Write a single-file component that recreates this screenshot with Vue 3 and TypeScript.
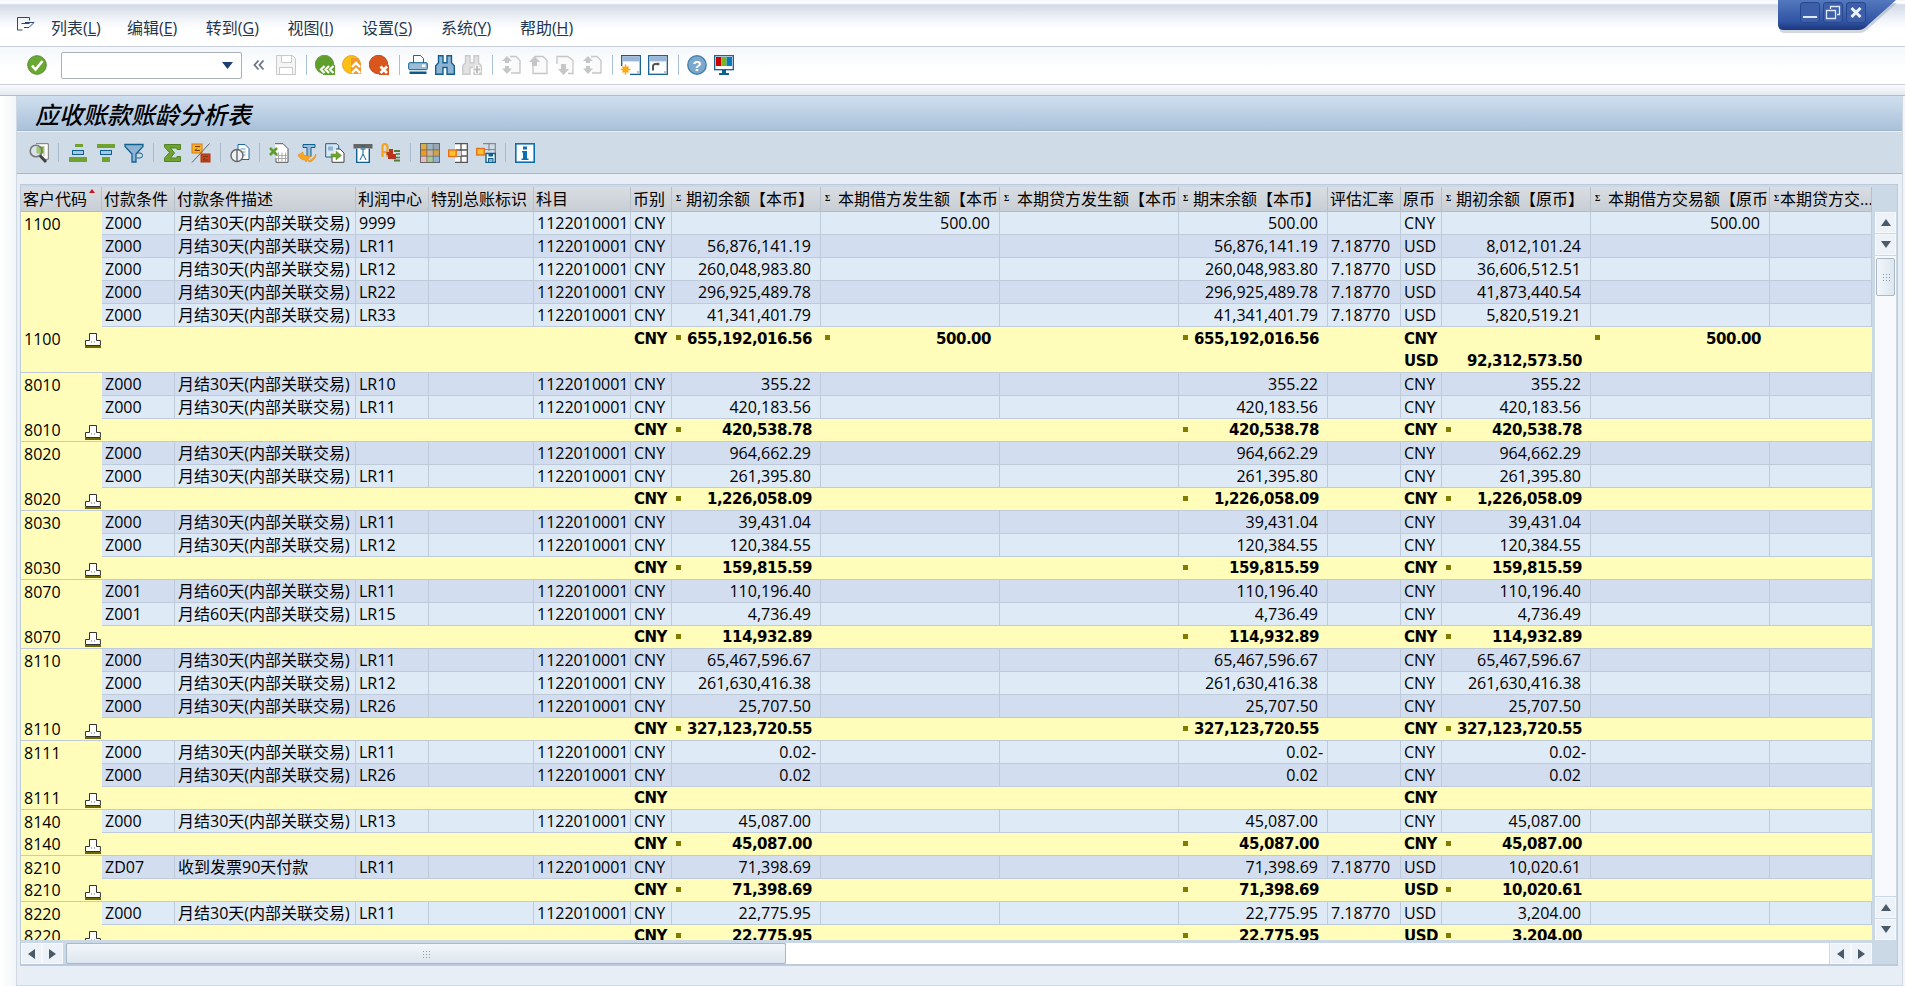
<script setup lang="ts">
interface Row { sum: boolean; alt: boolean; last: boolean; cells: string[]; marks: number[]; icon: boolean }

const L = '月结30天(内部关联交易)'
const M = '月结60天(内部关联交易)'
const A = '1122010001'
const R = '7.18770'

const rows: Row[] = []
let idx = 0
function d(c: string, term: string, desc: string, pc: string, open: string, dr: string, end: string, rate: string, ocur: string, oopen: string, odr: string) {
  rows.push({ sum: false, alt: idx % 2 === 1, last: false, icon: false, marks: [], cells: [c, term, desc, pc, '', A, 'CNY', open, dr, '', end, rate, ocur, oopen, odr, ''] })
  idx++
}
function s(c: string, ocur: string, v: string, end = v, oopen = v) {
  rows.push({ sum: true, alt: false, last: true, icon: true, marks: v ? [7, 10, 13] : [], cells: [c, '', '', '', '', '', 'CNY', v, '', '', end, '', ocur, oopen, '', ''] })
}

d('1100', 'Z000', L, '9999', '', '500.00', '500.00', '', 'CNY', '', '500.00')
d('', 'Z000', L, 'LR11', '56,876,141.19', '', '56,876,141.19', R, 'USD', '8,012,101.24', '')
d('', 'Z000', L, 'LR12', '260,048,983.80', '', '260,048,983.80', R, 'USD', '36,606,512.51', '')
d('', 'Z000', L, 'LR22', '296,925,489.78', '', '296,925,489.78', R, 'USD', '41,873,440.54', '')
d('', 'Z000', L, 'LR33', '41,341,401.79', '', '41,341,401.79', R, 'USD', '5,820,519.21', '')
rows.push({ sum: true, alt: false, last: false, icon: true, marks: [7, 8, 10, 14], cells: ['1100', '', '', '', '', '', 'CNY', '655,192,016.56', '500.00', '', '655,192,016.56', '', 'CNY', '', '500.00', ''] })
rows.push({ sum: true, alt: false, last: true, icon: false, marks: [], cells: ['', '', '', '', '', '', '', '', '', '', '', '', 'USD', '92,312,573.50', '', ''] })
d('8010', 'Z000', L, 'LR10', '355.22', '', '355.22', '', 'CNY', '355.22', '')
d('', 'Z000', L, 'LR11', '420,183.56', '', '420,183.56', '', 'CNY', '420,183.56', '')
s('8010', 'CNY', '420,538.78')
d('8020', 'Z000', L, '', '964,662.29', '', '964,662.29', '', 'CNY', '964,662.29', '')
d('', 'Z000', L, 'LR11', '261,395.80', '', '261,395.80', '', 'CNY', '261,395.80', '')
s('8020', 'CNY', '1,226,058.09')
d('8030', 'Z000', L, 'LR11', '39,431.04', '', '39,431.04', '', 'CNY', '39,431.04', '')
d('', 'Z000', L, 'LR12', '120,384.55', '', '120,384.55', '', 'CNY', '120,384.55', '')
s('8030', 'CNY', '159,815.59')
d('8070', 'Z001', M, 'LR11', '110,196.40', '', '110,196.40', '', 'CNY', '110,196.40', '')
d('', 'Z001', M, 'LR15', '4,736.49', '', '4,736.49', '', 'CNY', '4,736.49', '')
s('8070', 'CNY', '114,932.89')
d('8110', 'Z000', L, 'LR11', '65,467,596.67', '', '65,467,596.67', '', 'CNY', '65,467,596.67', '')
d('', 'Z000', L, 'LR12', '261,630,416.38', '', '261,630,416.38', '', 'CNY', '261,630,416.38', '')
d('', 'Z000', L, 'LR26', '25,707.50', '', '25,707.50', '', 'CNY', '25,707.50', '')
s('8110', 'CNY', '327,123,720.55')
d('8111', 'Z000', L, 'LR11', '0.02-', '', '0.02-', '', 'CNY', '0.02-', '')
d('', 'Z000', L, 'LR26', '0.02', '', '0.02', '', 'CNY', '0.02', '')
s('8111', 'CNY', '')
d('8140', 'Z000', L, 'LR13', '45,087.00', '', '45,087.00', '', 'CNY', '45,087.00', '')
s('8140', 'CNY', '45,087.00')
d('8210', 'ZD07', '收到发票90天付款', 'LR11', '71,398.69', '', '71,398.69', R, 'USD', '10,020.61', '')
s('8210', 'USD', '71,398.69', '71,398.69', '10,020.61')
d('8220', 'Z000', L, 'LR11', '22,775.95', '', '22,775.95', R, 'USD', '3,204.00', '')
s('8220', 'USD', '22,775.95', '22,775.95', '3,204.00')

const widths = [81, 73, 181, 73, 105, 97, 41, 149, 179, 179, 149, 73, 41, 149, 179, 102]
const numeric = new Set([7, 8, 9, 10, 13, 14, 15])

const headers = [
  { t: '客户代码', sort: true }, { t: '付款条件' }, { t: '付款条件描述' }, { t: '利润中心' }, { t: '特别总账标识' }, { t: '科目' }, { t: '币别' },
  { t: '期初余额【本币】', sig: 'near' }, { t: '本期借方发生额【本币', sig: 'far' }, { t: '本期贷方发生额【本币', sig: 'far' }, { t: '期末余额【本币】', sig: 'near' },
  { t: '评估汇率' }, { t: '原币' }, { t: '期初余额【原币】', sig: 'near' }, { t: '本期借方交易额【原币', sig: 'far' }, { t: '本期贷方交...', sig: 'tight' }
]
const menus = [['列表(', 'L'], ['编辑(', 'E'], ['转到(', 'G'], ['视图(', 'I'], ['设置(', 'S'], ['系统(', 'Y'], ['帮助(', 'H']]
</script>

<template>
  <div class="page">
    <header class="menubar">
      <svg class="menuicon" width="18" height="14" viewBox="0 0 18 14"><path d="M.5.5h12v3M12.500 6.500H4.500M.5.5v12.500h5M7 10.500h5l5-5H8" fill="none" stroke="#2b4a78"/></svg>
      <nav class="menus">
        <span v-for="m in menus" :key="m[1]">{{ m[0] }}<u>{{ m[1] }}</u>)</span>
      </nav>
      <div class="winbtns">
        <svg class="winshape" width="128" height="36" viewBox="0 0 128 36">
          <defs><linearGradient id="wg" x1="0" y1="0" x2="0" y2="1"><stop offset="0" stop-color="#5478bd"/><stop offset=".75" stop-color="#2f52a3"/><stop offset="1" stop-color="#1c3578"/></linearGradient></defs>
          <path d="M2 0h118l-28 25q-4 5-10 5H8q-6 0-6-5z" fill="#9aa5b8" opacity=".45" transform="translate(1 3)"/>
          <path d="M2 0h118l-28 25q-4 5-10 5H8q-6 0-6-5z" fill="url(#wg)"/>
        </svg>
        <div class="wbtn"><svg width="20" height="21" viewBox="0 0 20 21"><rect x="3" y="14" width="14" height="2" fill="#dfe8f6"/></svg></div>
        <div class="wbtn"><svg width="20" height="21" viewBox="0 0 20 21"><path d="M7.500 7V4.500h9v8H14M3.500 8.500h9v8h-9z" fill="none" stroke="#dfe8f6" stroke-width="1.300"/></svg></div>
        <div class="wbtn"><svg width="20" height="21" viewBox="0 0 20 21"><path d="M5.500 6l9 9M14.500 6l-9 9" stroke="#eef3fb" stroke-width="3"/></svg></div>
      </div>
    </header>

    <div class="tb1">
      <svg class="ic" viewBox="0 0 20 20"><circle cx="10" cy="10" r="9.300" fill="#6ba733" stroke="#4f8a34"/><path d="M5 10.500l3.500 4L15.500 6" fill="none" stroke="#fff" stroke-width="2.600"/></svg>
      <div class="combo"><svg width="11" height="7" viewBox="0 0 11 7"><path d="M0 0h11L5.500 7z" fill="#1f3f70"/></svg></div>
      <svg class="chev" width="12" height="12" viewBox="0 0 12 12"><path d="M5.500 1.500L1.500 6l4 4.500M10.500 1.500L6.500 6l4 4.500" fill="none" stroke="#6b7480" stroke-width="1.800"/></svg>
      <svg class="ic ml" viewBox="0 0 20 20"><path d="M.5.500h16l3 3v16H.5z" fill="#f5f5f5" stroke="#c9c9c9"/><path d="M5.500.5h10v7h-10zM3.500 12.500h13v7h-13z" fill="#fff" stroke="#c9c9c9"/></svg>
      <i class="sep s1"></i>
      <svg class="ic" viewBox="0 0 20 20"><circle cx="9.500" cy="9.500" r="9.200" fill="#5f9f2b" stroke="#6b9b3c"/><path d="M8 10h12v10H8z" fill="#5f9f2b"/><path d="M9.500 11l-3.500 3.500L9.500 18M14 11l-3.500 3.500L14 18M18.500 11L15 14.500l3.500 3.500" fill="none" stroke="#fff" stroke-width="2.200"/></svg>
      <svg class="ic" viewBox="0 0 20 20"><circle cx="9.500" cy="9.500" r="9" fill="#fdbf12" stroke="#f0a21c"/><path d="M9 3h7l3 6v10H9z" fill="#f29a2e"/><path d="M10 12l4-4 4 4M10 18l4-4 4 4" fill="none" stroke="#fff" stroke-width="2.400"/></svg>
      <svg class="ic" viewBox="0 0 20 20"><circle cx="9.500" cy="9.500" r="9.200" fill="#d9561d" stroke="#c8451a"/><path d="M10 10h10v10H10z" fill="#d9561d"/><path d="M11.500 11.500l6.500 6.500M18 11.500L11.500 18" stroke="#fff" stroke-width="2.800"/></svg>
      <i class="sep"></i>
      <svg class="ic" viewBox="0 0 20 20"><path d="M5.500.5h7l3 3v5h-10z" fill="#fff" stroke="#555"/><rect x=".7" y="7.700" width="18.600" height="7" rx="1" fill="#9dbcd8" stroke="#10608f"/><rect x="14" y="9.500" width="3.500" height="2.500" fill="#fff"/><rect x="1.500" y="16.500" width="17" height="2.500" fill="#0a5a8c"/></svg>
      <svg class="ic" viewBox="0 0 20 20"><path d="M3.500.7h4.500v7h4V.7h4.500v7l2.800 3v8.500h-7.300v-6.700h-4v6.700H.7v-8.500l2.800-3z" fill="#8fb3d3" stroke="#11618f" stroke-width="1.400"/></svg>
      <svg class="ic" viewBox="0 0 20 20"><path d="M3.500.7h4.500v7h4V.7h4.500v7l2.800 3v8.500h-7.300v-6.700h-4v6.700H.7v-8.500l2.800-3z" fill="#e2e2e2" stroke="#cbcbcb" stroke-width="1.400"/><path d="M11 14.500h8M15 10.500v8" stroke="#fff" stroke-width="4"/><path d="M11.500 14.500h7M15 11v7" stroke="#bdbdbd" stroke-width="2"/></svg>
      <i class="sep"></i>
      <svg class="ic" viewBox="0 0 20 20"><path d="M9 1.500h6l4 4v12.500h-9" fill="#fafafa" stroke="#c6c6c6" stroke-width="1.300"/><path d="M6 1l5 5H8v2H4V6H1zM4 11h4v2.500h3L6 19l-5-5.500h3z" fill="#c6c6c6"/></svg>
      <svg class="ic" viewBox="0 0 20 20"><path d="M7 1.500h8l4 4v13H5v-9" fill="#fafafa" stroke="#c6c6c6" stroke-width="1.300"/><path d="M6.500 1l5.500 6H9v4H4V7H1z" fill="#c6c6c6"/></svg>
      <svg class="ic" viewBox="0 0 20 20"><path d="M2 9V1.500h11l5 4v13h-5" fill="#fafafa" stroke="#c6c6c6" stroke-width="1.300"/><path d="M6 9h5v5h3l-5.500 6L3 14h3z" fill="#c6c6c6"/></svg>
      <svg class="ic" viewBox="0 0 20 20"><path d="M9 1.500h6l4 4v12.500h-9" fill="#fafafa" stroke="#c6c6c6" stroke-width="1.300"/><path d="M6 1l5 5H8v2H4V6H1zM4 11h4v2.500h3L6 19l-5-5.500h3z" fill="#c6c6c6"/></svg>
      <i class="sep"></i>
      <svg class="ic" viewBox="0 0 20 20"><path d="M.7 11V.7h18.600v18.600H9" fill="#fff" stroke="#10608f" stroke-width="1.300"/><rect x="1.400" y="1.400" width="17.200" height="5" fill="#9ab7d9"/><rect x="16" y="16" width="2.500" height="2.500" fill="#c4c4c4"/><path d="M4.500 9.500v10M0 14.500h9.500M1.500 11.500l6 6M7.500 11.500l-6 6" stroke="#f6a50e" stroke-width="1.500"/><circle cx="4.500" cy="14.500" r="3" fill="#fbab0b"/></svg>
      <svg class="ic" viewBox="0 0 20 20"><rect x=".7" y=".7" width="18.600" height="18.600" fill="#fff" stroke="#10608f" stroke-width="1.300"/><rect x="1.400" y="1.400" width="17.200" height="5" fill="#9ab7d9"/><rect x="16" y="16" width="2.500" height="2.500" fill="#c4c4c4"/><path d="M5 15.500V11.500q0-2.500 2.500-2.500H10" fill="none" stroke="#555" stroke-width="2"/><path d="M9.500 7l2.500 2-2.500 2z" fill="#555"/></svg>
      <i class="sep"></i>
      <svg class="ic" viewBox="0 0 20 20"><circle cx="10" cy="10" r="9.200" fill="#7ca8cd" stroke="#4583ad" stroke-width="1.400"/><text x="10" y="15.500" text-anchor="middle" class="qm">?</text></svg>
      <svg class="ic" viewBox="0 0 20 20"><rect x=".7" y=".7" width="18.600" height="14" fill="#fff" stroke="#10608f" stroke-width="1.300"/><rect x="2" y="2" width="5.300" height="9" fill="#cc0000"/><rect x="7.300" y="2" width="5.300" height="9" fill="#7ab51d"/><rect x="12.600" y="2" width="5.400" height="9" fill="#0a7abf"/><path d="M8 15h4v3H8zM5 18h10v2H5z" fill="#10608f"/></svg>
    </div>
    <div class="strip"></div>

    <main class="panel">
      <h1 class="title">应收账款账龄分析表</h1>
      <div class="tb2">
        <svg class="ic" viewBox="0 0 20 20"><path d="M7 .7h12.300v15.600H14" fill="#fff" stroke="#777"/><path d="M15 3v10" stroke="#aaa"/><rect x="7.500" y="3.500" width="7" height="7" fill="#6fae2c"/><circle cx="7" cy="8" r="5.800" fill="#eef2f0" fill-opacity=".35" stroke="#777" stroke-width="1.600"/><path d="M11 12.500l6 6.500" stroke="#444" stroke-width="3"/></svg>
        <i class="sep two"></i>
        <svg class="ic" viewBox="0 0 20 20"><rect x="7" y="1" width="8" height="3" fill="#6fa22e"/><rect x="4.500" y="7.500" width="11" height="4" fill="#a6c6e2" stroke="#10608f"/><rect x="1" y="14" width="18" height="5" fill="#6fa22e"/></svg>
        <svg class="ic" viewBox="0 0 20 20"><rect x="1" y="1" width="18" height="4" fill="#6fa22e"/><rect x="4.500" y="7.500" width="11" height="4" fill="#a6c6e2" stroke="#10608f"/><rect x="6" y="14" width="8" height="5" fill="#6fa22e"/></svg>
        <svg class="ic" viewBox="0 0 20 20"><path d="M1 1.500h18v2L12 11v8H8v-8L1 3.500z" fill="#8fb3d3" stroke="#11618f" stroke-width="1.300"/><path d="M13 10h3a2 2 0 010 5h-3" fill="none" stroke="#11618f"/></svg>
        <i class="sep two"></i>
        <svg class="ic" viewBox="0 0 20 20"><path d="M1.500 1.500h16v5h-3.500V5H7.500l4 5-4 5H14v-1.500h3.500v5h-16v-3.500l5-5.500-5-5.500z" fill="#6fa22e" stroke="#4f8424"/></svg>
        <svg class="ic" viewBox="0 0 20 20"><rect x="1" y="1" width="10" height="9" fill="#f6b21f" stroke="#de7a1c"/><rect x="10" y="11" width="9" height="8" fill="#c9431c" stroke="#a83214"/><path d="M4 3.500h5M9 7.500H4l2-2M12 13.500h5M17 17h-5l2-2" stroke="#7a3a10" fill="none"/><path d="M18.500 .5L1 19.500" stroke="#666"/></svg>
        <i class="sep two"></i>
        <svg class="ic" viewBox="0 0 20 20"><path d="M8 1.500h7l4 4v11H8z" fill="#fff" stroke="#1b6a9a"/><path d="M10.500 6h5M10.500 9h5M10.500 12h5" stroke="#5a93bd"/><circle cx="7" cy="12.500" r="6" fill="#eef2f6" stroke="#666" stroke-width="1.400"/><path d="M7 6.500v12" stroke="#666" stroke-width="1.400"/></svg>
        <i class="sep two"></i>
        <svg class="ic" viewBox="0 0 20 20"><path d="M6 .7h8l5 5v13.600H7V15" fill="#fff" stroke="#555"/><path d="M9.500 9.500v9M13 9.500v9M16.500 9.500v9M7 12.500h12M7 15.500h12" stroke="#aaa"/><path d="M1 5l7 7M8 5l-7 7" stroke="#5e9e2a" stroke-width="2.600"/></svg>
        <svg class="ic" viewBox="0 0 20 20"><path d="M6 1.500h12v3h-4v9h-4v-9H6z" fill="#9cbcd9" stroke="#10608f"/><path d="M1 12l5-3v2c2 2 4 2 8 2l-5 6-1-2c-3 0-6-2-7-5zM19 11c0 4-3 7-6 8l-2-1c3-1 6-3 8-7z" fill="#f9a51d" stroke="#e6861b" stroke-width=".6"/></svg>
        <svg class="ic" viewBox="0 0 20 20"><path d="M.7.700h11l2 2V14h-13z" fill="#dae6f1" stroke="#10608f"/><path d="M11 6h4l4 4v9.300H7V14" fill="#fff" stroke="#444"/><path d="M3 3.500h5v4H3z" fill="#8fb3d3"/><path d="M6 11h5V8l5.500 4.500L11 17v-3H6z" fill="#6fa22e" stroke="#5a8c25" stroke-width=".5"/></svg>
        <svg class="ic" viewBox="0 0 20 20"><rect x=".5" y="1" width="19" height="4.500" fill="#666"/><path d="M3.700 5.500v14h12.600v-14" fill="#fff" stroke="#10608f" stroke-width="1.400"/><path d="M8 3h4M10 6v5l-3 6M10 11l3 6M7.500 6h5" fill="none" stroke="#10608f"/></svg>
        <svg class="ic" viewBox="0 0 20 20"><path d="M1.500 14V4q0-3 2.500-3t2.500 3v10M1.500 9h5" fill="none" stroke="#f6a21e" stroke-width="2.200"/><path d="M8 6h4v5h3v5H7v-4H5.500V9H8z" fill="#b83420"/><path d="M13 8h6M13 17.500h6" stroke="#4f7d36" stroke-width="2"/><path d="M15 11h4M15 14.500h4" stroke="#4f7d36" stroke-width="1.600"/></svg>
        <i class="sep two"></i>
        <svg class="ic" viewBox="0 0 20 20"><rect width="20" height="20" fill="#666"/><rect x="1" y="1" width="5.500" height="5.500" fill="#d6ae4c"/><rect x="7.300" y="1" width="5.500" height="5.500" fill="#9ab6c6"/><rect x="13.500" y="1" width="5.500" height="5.500" fill="#9aa5b0"/><rect x="1" y="7.300" width="5.500" height="5.500" fill="#ef9a22"/><rect x="7.300" y="7.300" width="5.500" height="5.500" fill="#cbb3a0"/><rect x="13.500" y="7.300" width="5.500" height="5.500" fill="#cda24a"/><rect x="1" y="13.500" width="5.500" height="5.500" fill="#e7bcc0"/><rect x="7.300" y="13.500" width="5.500" height="5.500" fill="#a8c98a"/><rect x="13.500" y="13.500" width="5.500" height="5.500" fill="#8db1d6"/></svg>
        <svg class="ic" viewBox="0 0 20 20"><rect x="7" y="0" width="13" height="20" fill="#fff"/><path d="M7 .7h12.300v18.600H7M13 1v18M8 7h11M8 13h11" fill="none" stroke="#555" stroke-width="1.300"/><rect x="8" y="8" width="5" height="5" fill="#cfd6dc"/><rect x=".7" y="7" width="7.500" height="6.500" fill="#f9c22b" stroke="#e4711f" stroke-width="1.400"/></svg>
        <svg class="ic" viewBox="0 0 20 20"><path d="M7 .7h12.300V10M13 1v7M7 6.500h12" fill="none" stroke="#888" stroke-width="1.200"/><rect x=".7" y="5.500" width="7.500" height="6.500" fill="#f9c22b" stroke="#e4711f" stroke-width="1.400"/><path d="M10 10.500h9.300v9H10z" fill="#fff" stroke="#10608f" stroke-width="1.400"/><rect x="12.500" y="10.500" width="4.500" height="3" fill="#10608f"/><rect x="12.500" y="15.500" width="4.500" height="4" fill="#8fb3d3" stroke="#10608f"/></svg>
        <i class="sep two"></i>
        <svg class="ic" viewBox="0 0 20 20"><rect x=".8" y=".8" width="18.400" height="18.400" fill="#fff" stroke="#0a6fb0" stroke-width="1.600"/><rect x="8" y="3.500" width="4" height="3" fill="#0a6fb0"/><path d="M7 8h5v7.500h1.500V17h-7v-1.500H8V9.500H7z" fill="#0a6fb0"/></svg>
      </div>

      <section class="body">
        <div class="frame">
          <div class="main">
            <div class="viewport">
              <table class="grid">
                <colgroup><col v-for="(w, i) in widths" :key="i" :style="{ width: w + 'px' }" /></colgroup>
                <thead>
                  <tr>
                    <th v-for="h in headers" :key="h.t">
                      <span v-if="h.sig" class="sig" :class="h.sig">Σ</span>{{ h.t }}<i v-if="h.sort" class="sort"></i>
                    </th>
                  </tr>
                </thead>
                <tbody>
                  <tr v-for="(r, ri) in rows" :key="ri" :class="{ sum: r.sum, alt: r.alt, last: r.last }">
                    <td v-for="(c, i) in r.cells" :key="i" :class="{ num: numeric.has(i), tree: i === 0 }">
                      <div v-if="i === 0" class="treecell">
                        <span>{{ c }}</span>
                        <svg v-if="r.icon" width="16" height="15" viewBox="0 0 16 15"><path d="M4.500.5h7v7h3.900v5H.5v-5h4z" fill="#fff" stroke="#333"/><path d="M6 9h1M9 9h1" stroke="#666"/><rect x="0" y="13" width="16" height="2" fill="#6f6a00"/></svg>
                      </div>
                      <div v-else-if="numeric.has(i)" class="numcell">
                        <b v-if="r.marks.includes(i)" class="mark"></b>
                        <span v-if="c.endsWith('-')" class="val">{{ c.slice(0, -1) }}<span class="neg">-</span></span>
                        <span v-else class="val">{{ c }}</span>
                      </div>
                      <template v-else>{{ c }}</template>
                    </td>
                  </tr>
                </tbody>
              </table>
            </div>
            <div class="hscroll">
              <div class="sbtn"><svg width="7" height="10" viewBox="0 0 7 10"><path d="M7 0v10L0 5z" fill="#4b5a68"/></svg></div>
              <div class="sbtn"><svg width="7" height="10" viewBox="0 0 7 10"><path d="M0 0v10l7-5z" fill="#4b5a68"/></svg></div>
              <div class="hthumb"><span class="grip"></span></div>
              <div class="htrack"></div>
              <div class="sbtn"><svg width="7" height="10" viewBox="0 0 7 10"><path d="M7 0v10L0 5z" fill="#4b5a68"/></svg></div>
              <div class="sbtn"><svg width="7" height="10" viewBox="0 0 7 10"><path d="M0 0v10l7-5z" fill="#4b5a68"/></svg></div>
            </div>
          </div>
          <div class="vscroll">
            <div class="vbtn"><svg width="10" height="7" viewBox="0 0 10 7"><path d="M0 7h10L5 0z" fill="#4b5a68"/></svg></div>
            <div class="vbtn"><svg width="10" height="7" viewBox="0 0 10 7"><path d="M0 0h10L5 7z" fill="#4b5a68"/></svg></div>
            <div class="vtrack"><div class="vthumb"><span class="grip"></span></div></div>
            <div class="vbtn"><svg width="10" height="7" viewBox="0 0 10 7"><path d="M0 7h10L5 0z" fill="#4b5a68"/></svg></div>
            <div class="vbtn"><svg width="10" height="7" viewBox="0 0 10 7"><path d="M0 0h10L5 7z" fill="#4b5a68"/></svg></div>
          </div>
        </div>
      </section>
    </main>
  </div>
</template>

<style>
html, body { margin: 0; background: #fff; overflow: hidden; }
</style>

<style scoped>
.page {
  width: 1905px; height: 986px; overflow: hidden; display: flex; flex-direction: column;
  font: 16px/22px "Open Sans", "Noto Sans CJK SC", sans-serif; color: #000;
  background: linear-gradient(90deg, #fff, #f3f5f9 16px);
}
.menubar {
  height: 46px; flex: none; position: relative; box-sizing: content-box; border-bottom: 1px solid #c8cfdb;
  background: linear-gradient(#eef2fa 0, #fff 2px, #fff 3px, #d3dae8 5px, #f2f5f9 20px, #fff 30px);
  display: flex; align-items: flex-start;
}
.menuicon { margin: 17px 0 0 17px; flex: none; }
.menus { display: flex; gap: 28.6px; margin: 17px 0 0 16px; color: #25364c; }
.menus span { white-space: nowrap; }
.menus span:first-child { margin-right: -2.5px; }
.winbtns { position: absolute; left: 1776px; top: 0; width: 128px; height: 36px; display: flex; gap: 3px; padding: 2px 0 0 24px; box-sizing: border-box; }
.winshape { position: absolute; left: 0; top: 0; }
.wbtn { position: relative; width: 20px; height: 21px; border: 1px solid #27478f; border-radius: 3px; box-sizing: border-box; background: #3d5fa9; display: flex; align-items: center; justify-content: center; }
.wbtn svg { flex: none; }

.tb1 {
  height: 38px; flex: none; display: flex; align-items: center; padding: 0 0 1px 27px; box-sizing: border-box; margin: 0;
  background: linear-gradient(#f4f7fb, #fff 60%); border-bottom: 1px solid #c8cfdb;
}
.ic { width: 20px; height: 20px; flex: none; margin-right: 7px; }
.ic.ml { margin-left: 11px; }
.combo {
  width: 181px; height: 27px; box-sizing: border-box; border: 1px solid #a9b0b8; border-radius: 2px; background: #fff;
  display: flex; align-items: center; justify-content: flex-end; padding-right: 8px; margin: 0 11px 0 7px;
}
.chev { flex: none; }
.sep { display: block; flex: none; width: 1px; height: 20px; background: #a9c1d8; margin-left: 3px; margin-right: 8px; }
.sep.two { height: 19px; margin-left: 1px; margin-right: 9px; background: #a9bccd; }
.qm { font: bold 15px "Liberation Sans", sans-serif; fill: #fff; }
.strip { height: 10px; flex: none; background: linear-gradient(#f8fafc, #e4eaf3); border-bottom: 1px solid #b4bcc8; box-sizing: content-box; }

.panel {
  flex: 1; min-height: 0; margin: 0 2px 0 16px; display: flex; flex-direction: column; background: #e8eef6;
  border-left: 1px solid #d0d8e2; border-right: 1px solid #d0d8e2; border-bottom: 1px solid #d0d8e2;
}
.title {
  height: 35px; margin: 0; flex: none; box-sizing: border-box; padding-left: 18px;
  font: italic 500 24px/35px "Noto Sans CJK SC", sans-serif; color: #000;
  background: linear-gradient(#d0dfef, #a9c1da); border-bottom: 1px solid #a5b8ca;
}
.tb2 {
  height: 43px; flex: none; box-sizing: border-box; display: flex; align-items: center; padding-left: 12px;
  background: #cfdce7; border-top: 1px solid #e8eef5; border-bottom: 1px solid #a8b8c8;
}
.tb2 .ic { margin-right: 8px; }
.body { flex: 1; min-height: 0; padding: 10px 5px 0 3px; }
.frame {
  width: 1878px; height: 782px; box-sizing: border-box; display: flex; background: #cbd9e6;
  border: 1px solid #bccadb; padding: 2px 1px 0 0; border-bottom-width: 2px; gap: 3px;
}
.main { width: 1851px; flex: none; }
.viewport { height: 753px; overflow: hidden; background: #fffdb9; }
.grid { border-collapse: separate; border-spacing: 0; table-layout: fixed; width: 1851px; }
.grid th, .grid td {
  box-sizing: border-box; padding: 0 0 0 3px; white-space: nowrap; overflow: hidden; font-weight: 400; text-align: left;
}
.grid th {
  height: 25px; line-height: 24px; background: linear-gradient(#dadee3, #c8ced5); border-right: 1px solid #b5c0cb; border-bottom: 1px solid #aebccb;
  padding-left: 2px; position: relative;
}
.sort { position: absolute; left: 68px; top: 2px; width: 0; height: 0; border: 3px solid transparent; border-top: 0; border-bottom: 4px solid #c41a1a; }
.sig { font: bold 8px/24px "Liberation Serif", serif; display: inline-block; width: 5px; margin-left: 2px; vertical-align: top; }
.sig.near { margin-right: 5px; }
.sig.far { margin-right: 8px; }
.sig.tight { margin-right: 1px; }
.grid td { height: 23px; line-height: 22px; background: #deeaf5; border-right: 1px solid #bfcbd9; border-bottom: 1px solid #bfcbd9; }
.grid tr.alt td { background: #d2deef; }
.grid td.tree, .grid tr.alt td.tree { background: #fffdb9; border-right: 0; border-bottom: 0; padding-right: 0; }
.grid tr.sum td { background: #fffdb9; border-right: 0; border-bottom: 0; font: bold 15px/22px "DejaVu Sans", "Noto Sans CJK SC", sans-serif; letter-spacing: -.5px; }
.grid tr.sum td.tree { font: 16px/22px "Open Sans", sans-serif; letter-spacing: 0; }
.grid tr.sum.last td { border-bottom: 1px solid #bfcbd9; }
.treecell { display: flex; justify-content: space-between; align-items: center; height: 22px; padding-right: 1px; }
.treecell svg { flex: none; margin-top: 4px; }
.grid td.num { padding: 0; }
.numcell { display: flex; align-items: center; height: 22px; padding: 0 9px 0 4px; }
.val { margin-left: auto; position: relative; }
.neg { position: absolute; left: 100%; }
.mark { display: block; flex: none; width: 5px; height: 5px; background: #807c00; margin-top: -2px; }

.hscroll { height: 21px; margin-top: 3px; display: flex; }
.sbtn { width: 21px; flex: none; background: #edf2f8; border: 1px solid #f6f9fc; box-sizing: border-box; display: flex; align-items: center; justify-content: center; }
.hthumb {
  width: 720px; flex: none; margin-left: 3px; box-sizing: border-box; background: linear-gradient(#f2f6fa, #dde6ef);
  border: 1px solid #a9b8c6; border-radius: 2px; display: flex; align-items: center; justify-content: center;
}
.htrack { flex: 1; background: #fff; margin-right: 1px; }
.vscroll { width: 21px; flex: none; padding-top: 25px; height: 753px; box-sizing: border-box; display: flex; flex-direction: column; }
.vbtn { height: 21px; flex: none; margin-bottom: 1px; background: #edf2f8; border: 1px solid #f6f9fc; box-sizing: border-box; display: flex; align-items: center; justify-content: center; }
.vbtn:last-child { margin-bottom: 0; }
.vtrack { flex: 1; background: #f7f9fc; margin-bottom: 1px; padding-top: 2px; }
.vthumb {
  height: 38px; margin: 0 1px; box-sizing: border-box; background: linear-gradient(90deg, #f2f6fa, #dde6ef);
  border: 1px solid #a9b8c6; border-radius: 2px; display: flex; align-items: center; justify-content: center;
}
.grip { display: block; width: 8px; height: 8px; background-image: radial-gradient(#8d9aa7 40%, transparent 45%); background-size: 3px 3px; }
</style>
